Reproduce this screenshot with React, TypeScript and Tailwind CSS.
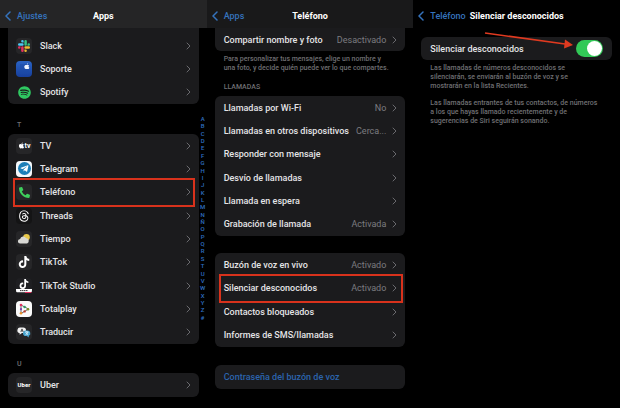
import React, { useState } from 'react';
import { FaApple, FaPhoneAlt, FaSpotify, FaTelegramPlane, FaTiktok } from 'react-icons/fa';
import { FaThreads } from 'react-icons/fa6';

interface AppItem {
  name: string;
  icon: React.ReactNode;
  marked?: boolean;
}

interface SettingItem {
  name: string;
  value?: string;
  marked?: boolean;
}

const LETTERS = 'ABCDEFGHIJKLMNÑOPQRSTUVWXYZ#'.split('');

/* App icons */

const Tile = ({ className = 'bg-[#262628]', children }: { className?: string; children?: React.ReactNode }) => (
  <span className={`flex size-4 shrink-0 items-center justify-center overflow-hidden rounded-[4px] ${className}`}>
    {children}
  </span>
);

const SlackIcon = () => (
  <Tile>
    <svg viewBox="0 0 24 24" className="size-3">
      <path fill="#e0305e" d="M5 15.2a2.5 2.5 0 1 1-2.5-2.5H5zM6.3 15.2a2.5 2.5 0 0 1 5 0v6.3a2.5 2.5 0 0 1-5 0z" />
      <path fill="#4cc8f2" d="M8.8 5a2.5 2.5 0 1 1 2.5-2.5V5zM8.8 6.3a2.5 2.5 0 0 1 0 5H2.5a2.5 2.5 0 0 1 0-5z" />
      <path fill="#35c284" d="M19 8.8a2.5 2.5 0 1 1 2.5 2.5H19zM17.7 8.8a2.5 2.5 0 0 1-5 0V2.5a2.5 2.5 0 0 1 5 0z" />
      <path fill="#f0b932" d="M15.2 19a2.5 2.5 0 1 1-2.5 2.5V19zM15.2 17.7a2.5 2.5 0 0 1 0-5h6.3a2.5 2.5 0 0 1 0 5z" />
    </svg>
  </Tile>
);

const SupportIcon = () => (
  <Tile className="bg-linear-to-b from-[#2a63c4] to-[#173f9c]">
    <svg viewBox="0 0 16 16" className="size-4">
      <path fill="#1c4aa6" d="M4 3h9v10H4z" opacity=".5" />
      <path
        fill="#eef4ff"
        d="M10.8 3.6c.1-.8.6-1.2 1.2-1.3 0 .8-.4 1.2-1.2 1.3zM10.6 4.1c.7 0 1.1-.3 1.6-.2.5.1.8.3 1 .6-.9.6-.7 1.8.2 2.2-.3.8-.8 1.4-1.4 1.4-.4 0-.6-.2-1.1-.2s-.8.2-1.1.2c-.9-.1-1.6-1.4-1.5-2.5.1-1 .9-1.6 2.3-1.5z"
      />
    </svg>
  </Tile>
);

const WeatherIcon = () => (
  <Tile>
    <svg viewBox="0 0 16 16" className="size-4">
      <circle cx="10.5" cy="6.3" r="3.3" fill="#e8c84a" />
      <path fill="#d8d8d4" d="M4.3 12.5a2.3 2.3 0 0 1-.2-4.6 3.2 3.2 0 0 1 6-.6 2.7 2.7 0 0 1 1 5.2z" />
    </svg>
  </Tile>
);

const TiktokStudioIcon = () => (
  <Tile className="flex-col bg-[#1f1f22]">
    <FaTiktok className="size-[10px] shrink-0 text-white" />
    <svg viewBox="0 0 16 4" className="h-1 w-4 shrink-0">
      <path fill="#fff" d="M0 0h16v3.2H0z" />
      <path fill="#e0305e" d="M9 3h7v1H9z" />
      <path stroke="#333" strokeWidth="1" strokeDasharray="1.5 .5" d="M4 1.6h8" />
    </svg>
  </Tile>
);

const TotalplayIcon = () => (
  <Tile className="bg-[#fafafa]">
    <svg viewBox="0 0 16 16" className="size-4">
      <path fill="none" stroke="#444" strokeWidth=".8" d="M5 4v8.5L12.5 8z" />
      <circle cx="5" cy="4" r="1.3" fill="#e0305e" />
      <circle cx="5" cy="8.2" r="1.1" fill="#7b3fb0" />
      <circle cx="5" cy="12.3" r="1.3" fill="#e8912c" />
      <circle cx="8.6" cy="6" r="1.2" fill="#2a9d6a" />
      <circle cx="8.6" cy="10.4" r="1.2" fill="#c0392b" />
      <circle cx="12" cy="8.2" r="1.3" fill="#7a8f2a" />
    </svg>
  </Tile>
);

const TranslateIcon = () => (
  <Tile>
    <svg viewBox="0 0 16 16" className="size-4">
      <path fill="#f2f2f2" d="M4.8 3.5h2.4a2.6 2.6 0 0 1 0 5.6H6l-2.4 1.7V9a2.8 2.8 0 0 1 1.2-5.5z" />
      <path fill="#4aa6d0" d="M9.8 6.5h1.7a2.8 2.8 0 0 1 1.3 5.3v1.7l-2-1.4h-1a2.8 2.8 0 0 1 0-5.6z" />
      <path fill="none" stroke="#333" strokeWidth=".8" d="M4.8 7.8L6 4.9l1.2 2.9M5.2 7h1.6" />
      <path fill="none" stroke="#e8f6ff" strokeWidth=".8" d="M9.2 8h3.2M10.8 7.2V8M12 8c-.4 1.3-1.3 2.2-2.5 2.7M9.8 8.400c.5 1 1.200 1.800 2.400 2.300" />
    </svg>
  </Tile>
);

const APPS_S: AppItem[] = [
  { name: 'Slack', icon: <SlackIcon /> },
  { name: 'Soporte', icon: <SupportIcon /> },
  { name: 'Spotify', icon: <Tile className=""><FaSpotify className="size-[13px] text-[#2fc861]" /></Tile> },
];

const APPS_T: AppItem[] = [
  {
    name: 'TV',
    icon: (
      <Tile className="bg-[#262628] text-[7px] font-bold text-white">
        <FaApple className="size-[7px]" />
        tv
      </Tile>
    ),
  },
  {
    name: 'Telegram',
    icon: (
      <Tile className="bg-[#f4f8fb]">
        <span className="flex size-[13px] items-center justify-center rounded-full bg-[#1c7fb8]">
          <FaTelegramPlane className="size-[9px] text-white" />
        </span>
      </Tile>
    ),
  },
  {
    name: 'Teléfono',
    marked: true,
    icon: <Tile><FaPhoneAlt className="size-[11px] text-[#3ecf5c]" /></Tile>,
  },
  { name: 'Threads', icon: <Tile className="bg-[#141415]"><FaThreads className="size-3 text-white" /></Tile> },
  { name: 'Tiempo', icon: <WeatherIcon /> },
  { name: 'TikTok', icon: <Tile><FaTiktok className="size-3 text-white" /></Tile> },
  { name: 'TikTok Studio', icon: <TiktokStudioIcon /> },
  { name: 'Totalplay', icon: <TotalplayIcon /> },
  { name: 'Traducir', icon: <TranslateIcon /> },
];

const APPS_U: AppItem[] = [
  { name: 'Uber', icon: <Tile className="bg-[#262628] text-[6px] font-bold text-white">Uber</Tile> },
];

const CALLS: SettingItem[] = [
  { name: 'Llamadas por Wi-Fi', value: 'No' },
  { name: 'Llamadas en otros dispositivos', value: 'Cerca...' },
  { name: 'Responder con mensaje' },
  { name: 'Desvío de llamadas' },
  { name: 'Llamada en espera' },
  { name: 'Grabación de llamada', value: 'Activada' },
];

const VOICEMAIL: SettingItem[] = [
  { name: 'Buzón de voz en vivo', value: 'Activado' },
  { name: 'Silenciar desconocidos', value: 'Activado', marked: true },
  { name: 'Contactos bloqueados' },
  { name: 'Informes de SMS/llamadas' },
];

/* Shared pieces */

const Chevron = () => (
  <svg viewBox="0 0 5 8" className="h-2 w-[5px] shrink-0" fill="none" stroke="#6a6a6e" strokeLinecap="round">
    <path d="M1 1l3 3-3 3" />
  </svg>
);

const Header = ({ back, title, className = '' }: { back: string; title: string; className?: string }) => (
  <header className={`grid h-7 items-center px-[5px] pt-1 ${className}`}>
    <a href="#" className="flex items-center gap-[6px] text-[#3573bd]">
      <svg viewBox="0 0 6 10" className="h-[10px] w-[6px]" fill="none" stroke="currentColor" strokeWidth="1.5" strokeLinecap="round">
        <path d="M5 1L1 5l4 4" />
      </svg>
      {back}
    </a>
    <h1 className="text-center font-bold whitespace-nowrap text-white">{title}</h1>
  </header>
);

const Mark = ({ className }: { className: string }) => (
  <span className={`pointer-events-none absolute z-10 border-2 border-[#d8321c] ${className}`} />
);

const AppList = ({ items, className }: { items: AppItem[]; className: string }) => (
  <ul className={`grid auto-rows-fr bg-[#1b1b1d] ${className}`}>
    {items.map((item) => (
      <li key={item.name} className="relative">
        <a href="#" className="flex h-full items-center gap-2 px-2">
          {item.icon}
          <span className="flex-1">{item.name}</span>
          <Chevron />
        </a>
        {item.marked && <Mark className="-inset-y-[3px] right-1 left-[5px]" />}
      </li>
    ))}
  </ul>
);

const SettingList = ({ items, className }: { items: SettingItem[]; className: string }) => (
  <ul className={`grid auto-rows-fr bg-[#1b1b1d] ${className}`}>
    {items.map((item) => (
      <li key={item.name} className="relative">
        <a href="#" className="flex h-full items-center gap-[6px] pr-2 pl-[9px] whitespace-nowrap">
          <span className="flex-1">{item.name}</span>
          {item.value && <span className="font-normal text-[#7c7c80]">{item.value}</span>}
          <Chevron />
        </a>
        {item.marked && <Mark className="-inset-y-[3px] right-[2px] left-1" />}
      </li>
    ))}
  </ul>
);

const GroupTitle = ({ children, className }: { children: React.ReactNode; className: string }) => (
  <h2 className={`flex items-end px-[9px] pb-1 text-[7px] leading-[9px] text-[#6f6f73] ${className}`}>{children}</h2>
);

const App = () => {
  const [silence, setSilence] = useState(true);

  return (
    <main className="grid min-h-screen grid-cols-3 bg-black font-['Roboto',sans-serif] text-[9px] leading-3 font-medium text-[#e4e4e6]">
      {/* Apps */}
      <section>
        <Header back="Ajustes" title="Apps" className="grid-cols-[1fr_auto_1fr] bg-[#252526]" />
        <div className="flex pl-2">
          <div className="flex-1">
            <AppList items={APPS_S} className="min-h-19 rounded-b-md pt-[6px]" />
            <GroupTitle className="h-[30px]">T</GroupTitle>
            <AppList items={APPS_T} className="min-h-[210px] rounded-md" />
            <GroupTitle className="h-[29px]">U</GroupTitle>
            <AppList items={APPS_U} className="min-h-6 rounded-md" />
          </div>
          <nav className="mt-[87px] grid h-[206px] w-2 auto-rows-fr text-center text-[6px] leading-[7px] text-[#2f6fc0]">
            {LETTERS.map((letter) => (
              <a key={letter} href="#">{letter}</a>
            ))}
          </nav>
        </div>
      </section>

      {/* Teléfono */}
      <section>
        <Header back="Apps" title="Teléfono" className="grid-cols-[1fr_auto_1fr] bg-[#19191a]" />
        <div className="px-2">
          <SettingList items={[{ name: 'Compartir nombre y foto', value: 'Desactivado' }]} className="min-h-[23px] rounded-b-md" />
          <p className="px-[9px] pt-1 text-[7px] leading-[9px] whitespace-nowrap text-[#6f6f73]">
            Para personalizar tus mensajes, elige un nombre y
            <br />
            una foto, y decide quién puede ver lo que compartes.
          </p>
          <GroupTitle className="h-[23px]">LLAMADAS</GroupTitle>
          <SettingList items={CALLS} className="min-h-[140px] rounded-md" />
          <SettingList items={VOICEMAIL} className="mt-[17px] min-h-[94px] rounded-md" />
          <a href="#" className="mt-[18px] flex h-6 items-center rounded-md bg-[#1b1b1d] px-[9px] text-[#2b64ad]">
            Contraseña del buzón de voz
          </a>
        </div>
      </section>

      {/* Silenciar desconocidos */}
      <section>
        <Header back="Teléfono" title="Silenciar desconocidos" className="grid-cols-[auto_auto] justify-start gap-1" />
        <div className="px-2 pt-[9px]">
          <div className="relative flex h-[23px] items-center justify-between rounded-md bg-[#1b1b1d] px-[9px]">
            <label htmlFor="silence">Silenciar desconocidos</label>
            <input
              id="silence"
              type="checkbox"
              checked={silence}
              onChange={(e) => setSilence(e.target.checked)}
              className="flex h-[17px] w-[27px] appearance-none items-center rounded-full bg-[#48484a] px-px before:size-[15px] before:rounded-full before:bg-white checked:justify-end checked:bg-[#32c957]"
            />
            <svg viewBox="0 0 90 18" className="pointer-events-none absolute -top-[6px] right-[38px] h-[18px] w-[90px]">
              <path stroke="#e03a20" strokeWidth="1.6" d="M1 2l80 11" />
              <path fill="#e03a20" d="M81 8.500l8 5.500-9 3.500z" />
            </svg>
          </div>
          <div className="space-y-2 px-[9px] pt-1 text-[7px] leading-[9px] whitespace-nowrap text-[#6f6f73]">
            <p>
              Las llamadas de números desconocidos se
              <br />
              silenciarán, se enviarán al buzón de voz y se
              <br />
              mostrarán en la lista Recientes.
            </p>
            <p>
              Las llamadas entrantes de tus contactos, de números
              <br />
              a los que hayas llamado recientemente y de
              <br />
              sugerencias de Siri seguirán sonando.
            </p>
          </div>
        </div>
      </section>
    </main>
  );
};

export default App;
